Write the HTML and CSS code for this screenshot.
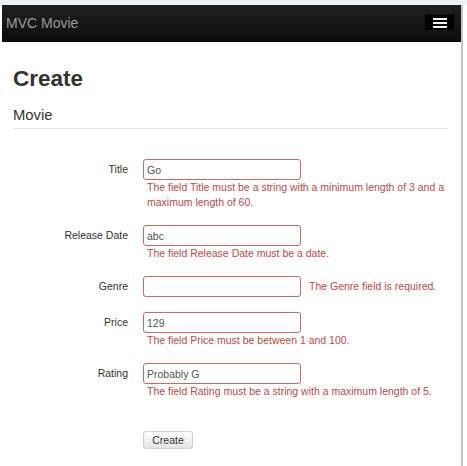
FILE: index.html
```html
<!DOCTYPE html>
<html>
<head>
<meta charset="utf-8">
<title>Create - MVC Movie</title>
<link rel="stylesheet" href="styles.css">
</head>
<body>
<div class="page">
  <div class="navbar">
    <span class="brand">MVC Movie</span>
    <button class="nav-toggle" type="button" aria-label="Menu">
      <span class="bar"></span><span class="bar"></span><span class="bar"></span>
    </button>
  </div>
  <div class="content">
    <h1 class="title">Create</h1>
    <h4 class="subtitle">Movie</h4>
    <hr class="rule">
    <form class="form">
      <div class="group">
        <label class="label">Title</label>
        <div class="controls">
          <input class="input" type="text" value="Go">
          <span class="error">The field Title must be a string with a minimum length of 3 and a maximum length of 60.</span>
        </div>
      </div>
      <div class="group">
        <label class="label">Release Date</label>
        <div class="controls">
          <input class="input" type="text" value="abc">
          <span class="error">The field Release Date must be a date.</span>
        </div>
      </div>
      <div class="group">
        <label class="label">Genre</label>
        <div class="controls controls-inline">
          <input class="input" type="text" value="">
          <span class="error error-inline">The Genre field is required.</span>
        </div>
      </div>
      <div class="group">
        <label class="label">Price</label>
        <div class="controls">
          <input class="input" type="text" value="129">
          <span class="error">The field Price must be between 1 and 100.</span>
        </div>
      </div>
      <div class="group">
        <label class="label">Rating</label>
        <div class="controls">
          <input class="input" type="text" value="Probably G">
          <span class="error">The field Rating must be a string with a maximum length of 5.</span>
        </div>
      </div>
      <div class="group actions">
        <span></span>
        <div class="controls">
          <button class="btn" type="button">Create</button>
        </div>
      </div>
    </form>
  </div>
</div>
</body>
</html>
```

FILE: styles.css
```css
html, body {
  margin: 0;
  padding: 0;
}
body {
  background: #ffffff;
  border-top: 5px solid #eef2f5;
  font-family: "Liberation Sans", Arial, sans-serif;
  color: #333333;
}
.page {
  margin-left: 2px;
  width: 459px;
  min-height: 461px;
  border-right: 2px solid #c6c6c6;
  background: #ffffff;
}
.navbar {
  height: 37px;
  background: linear-gradient(#202020, #0c0c0c);
  display: flex;
  align-items: center;
  justify-content: space-between;
  padding: 0 6px 0 4px;
}
.brand {
  color: #9a9a9a;
  font-size: 14px;
  line-height: 37px;
}
.nav-toggle {
  width: 31px;
  height: 17px;
  margin-top: -2px;
  padding: 3px 0 0 0;
  border: 1px solid #121212;
  background: #030303;
  display: flex;
  flex-direction: column;
  align-items: center;
  gap: 2px;
  box-sizing: border-box;
}
.bar {
  display: block;
  width: 14px;
  height: 2px;
  background: #f2f2f2;
}
.content {
  padding: 24px 13px 0 11px;
}
.title {
  margin: 0;
  font-size: 22.5px;
  line-height: 25px;
  font-weight: bold;
  color: #333333;
}
.subtitle {
  margin: 15px 0 0 0;
  font-size: 14.8px;
  line-height: 18px;
  font-weight: normal;
  color: #333333;
}
.rule {
  margin: 4px 0 0 0;
  border: 0;
  border-top: 1px solid #e6e6e6;
  height: 0;
}
.form {
  margin-top: 30px;
  font-size: 10.5px;
}
.group {
  display: grid;
  grid-template-columns: 115px 305px;
  column-gap: 15px;
  margin-bottom: 15px;
}
.label {
  text-align: right;
  line-height: 15px;
  padding-top: 3px;
  color: #333333;
}
.controls {
  display: flex;
  flex-direction: column;
  align-items: flex-start;
}
.controls-inline {
  flex-direction: row;
  align-items: center;
  gap: 8px;
}
.input {
  box-sizing: border-box;
  width: 158px;
  height: 21px;
  margin: 0;
  padding: 2px 3px;
  border: 1px solid #c8696b;
  border-radius: 3px;
  font-family: "Liberation Sans", Arial, sans-serif;
  font-size: 10.5px;
  line-height: 15px;
  color: #555555;
  background: #ffffff;
}
.error {
  display: block;
  box-sizing: border-box;
  width: 100%;
  padding-left: 4px;
  line-height: 15px;
  color: #b94a48;
}
.error-inline {
  width: auto;
  padding-left: 0;
}
.actions {
  margin-top: 32px;
}
.btn {
  box-sizing: border-box;
  width: 50px;
  height: 18px;
  padding: 0;
  border: 1px solid #cfcfcf;
  border-radius: 3px;
  background: linear-gradient(#ffffff, #e4e4e4);
  font-family: "Liberation Sans", Arial, sans-serif;
  font-size: 10.5px;
  line-height: 16px;
  color: #333333;
}
```
